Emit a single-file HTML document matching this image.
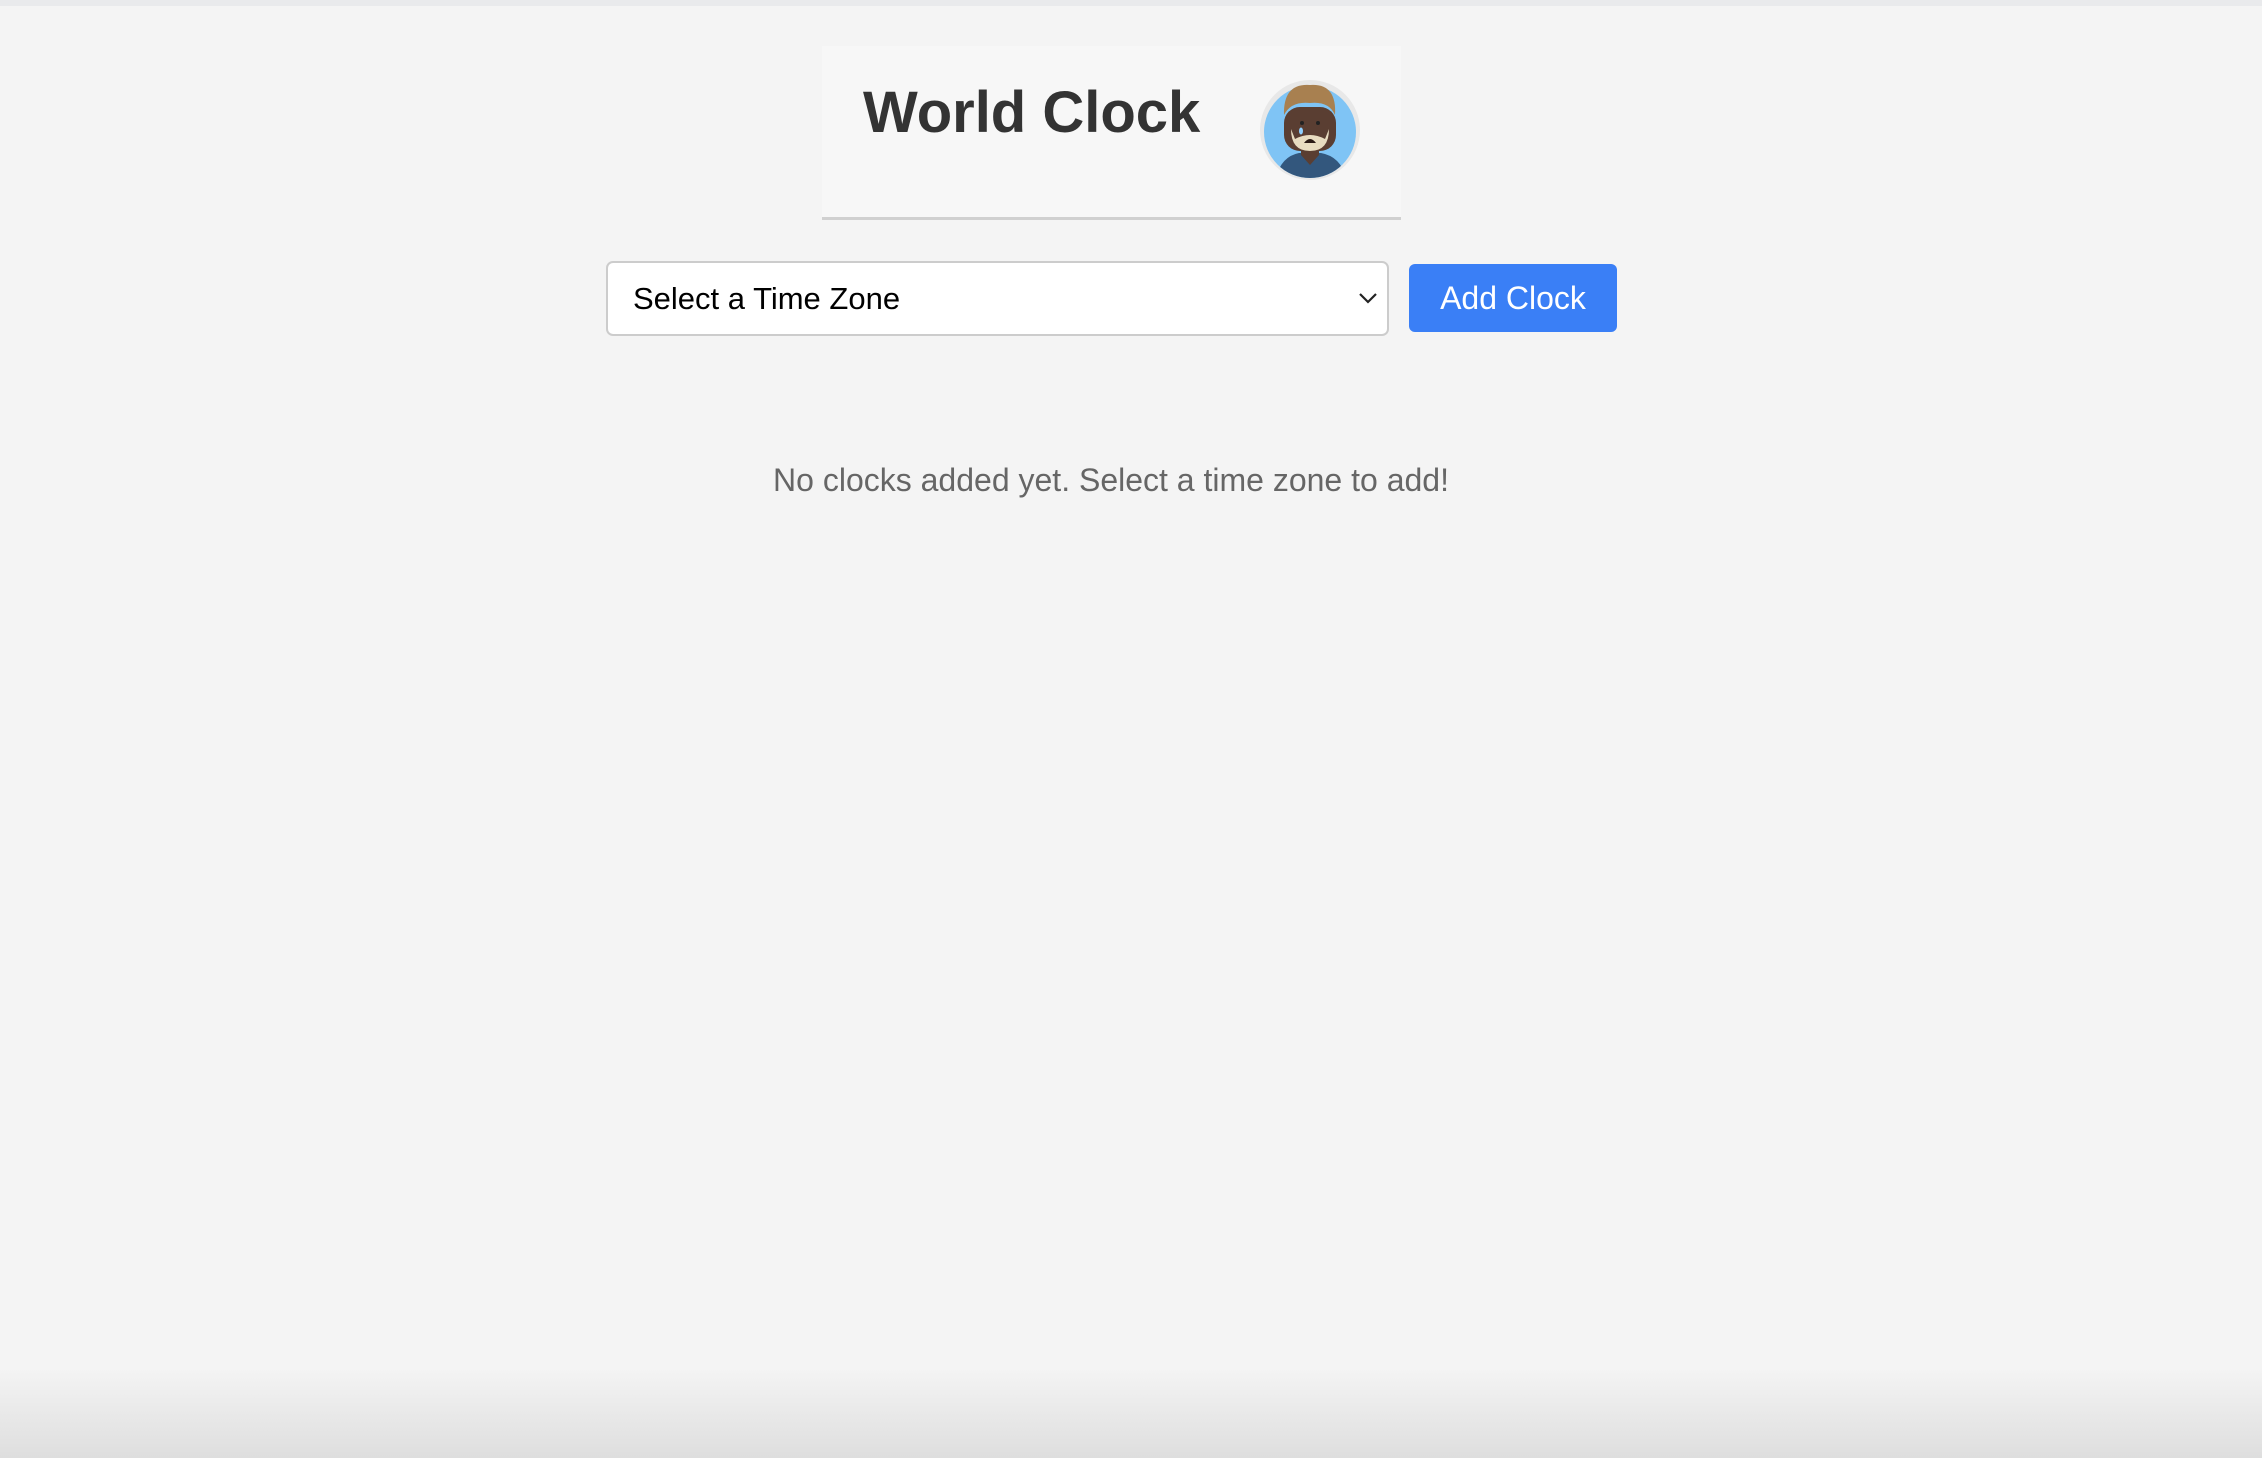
<!DOCTYPE html>
<html><head><meta charset="utf-8"><style>
html,body{margin:0;padding:0;width:2262px;height:1458px;overflow:hidden;background:#f4f4f4;font-family:"Liberation Sans",Arial,sans-serif;position:relative}
.top{position:absolute;left:0;top:0;width:2262px;height:6px;background:#e9eaec}
.hdr{position:absolute;left:822px;top:46px;width:579px;height:171px;background:#f7f7f7;border-bottom:3px solid #d0d0d0}
.title{position:absolute;left:41px;top:27px;font-size:58px;font-weight:bold;color:#333;line-height:80px;white-space:nowrap}
.av{position:absolute;left:437px;top:33px}
.sel{position:absolute;left:606px;top:261px;width:779px;height:71px;border:2px solid #ccc;border-radius:7px;background:#fff;box-sizing:content-box}
.sel span{position:absolute;left:25px;top:0;line-height:71px;font-size:31px;color:#000}
.sel svg{position:absolute;right:8px;top:28px}
.btn{position:absolute;left:1409px;top:264px;width:208px;height:68px;background:#3a7ff6;border-radius:6px;color:#fff;font-size:32px;line-height:68px;text-align:center}
.msg{position:absolute;left:0;width:2222px;top:458px;text-align:center;font-size:32px;color:#666;line-height:44px}
.bot{position:absolute;left:0;bottom:0;width:2262px;height:90px;background:linear-gradient(#f4f4f400,#dedede)}
</style></head><body>
<div class="top"></div>
<div class="hdr">
<div class="title">World Clock</div>
<svg class="av" width="102" height="102" viewBox="0 0 102 102">
<circle cx="51" cy="51" r="50" fill="#e8e8e8"/>
<clipPath id="c"><circle cx="51" cy="53" r="46"/></clipPath>
<circle cx="51" cy="53" r="46" fill="#7fc4f5"/>
<g clip-path="url(#c)">
<path d="M16 104 Q20 78 40 74 L62 74 Q84 78 88 104 Z" fill="#33577d"/>
<path d="M42 66 L60 66 L60 76 L51 86 L42 76 Z" fill="#5a3e32"/>
</g>
<rect x="25" y="28" width="52" height="44" rx="16" fill="#5a3e32"/>
<path d="M32 50 Q32 72 51 72 Q70 72 70 50 L66 60 Q51 52 36 60 Z" fill="#e8dcc0"/>
<path d="M45 64 Q51 56 57 64 Z" fill="#2a1a14"/>
<path d="M25 36 Q24 4 51 6 Q78 4 76 36 Q70 22 51 24 Q32 22 25 36Z" fill="#a88050"/>
<circle cx="43" cy="44" r="2" fill="#222"/><circle cx="59" cy="44" r="2" fill="#222"/>
<ellipse cx="42" cy="52" rx="2" ry="3.5" fill="#8fd0ff"/>
</svg>
</div>
<div class="sel"><span>Select a Time Zone</span>
<svg width="22" height="14" viewBox="0 0 22 14"><path d="M3 3 L11 11 L19 3" fill="none" stroke="#222" stroke-width="2.2"/></svg></div>
<div class="btn">Add Clock</div>
<div class="msg">No clocks added yet. Select a time zone to add!</div>
<div class="bot"></div>
</body></html>
